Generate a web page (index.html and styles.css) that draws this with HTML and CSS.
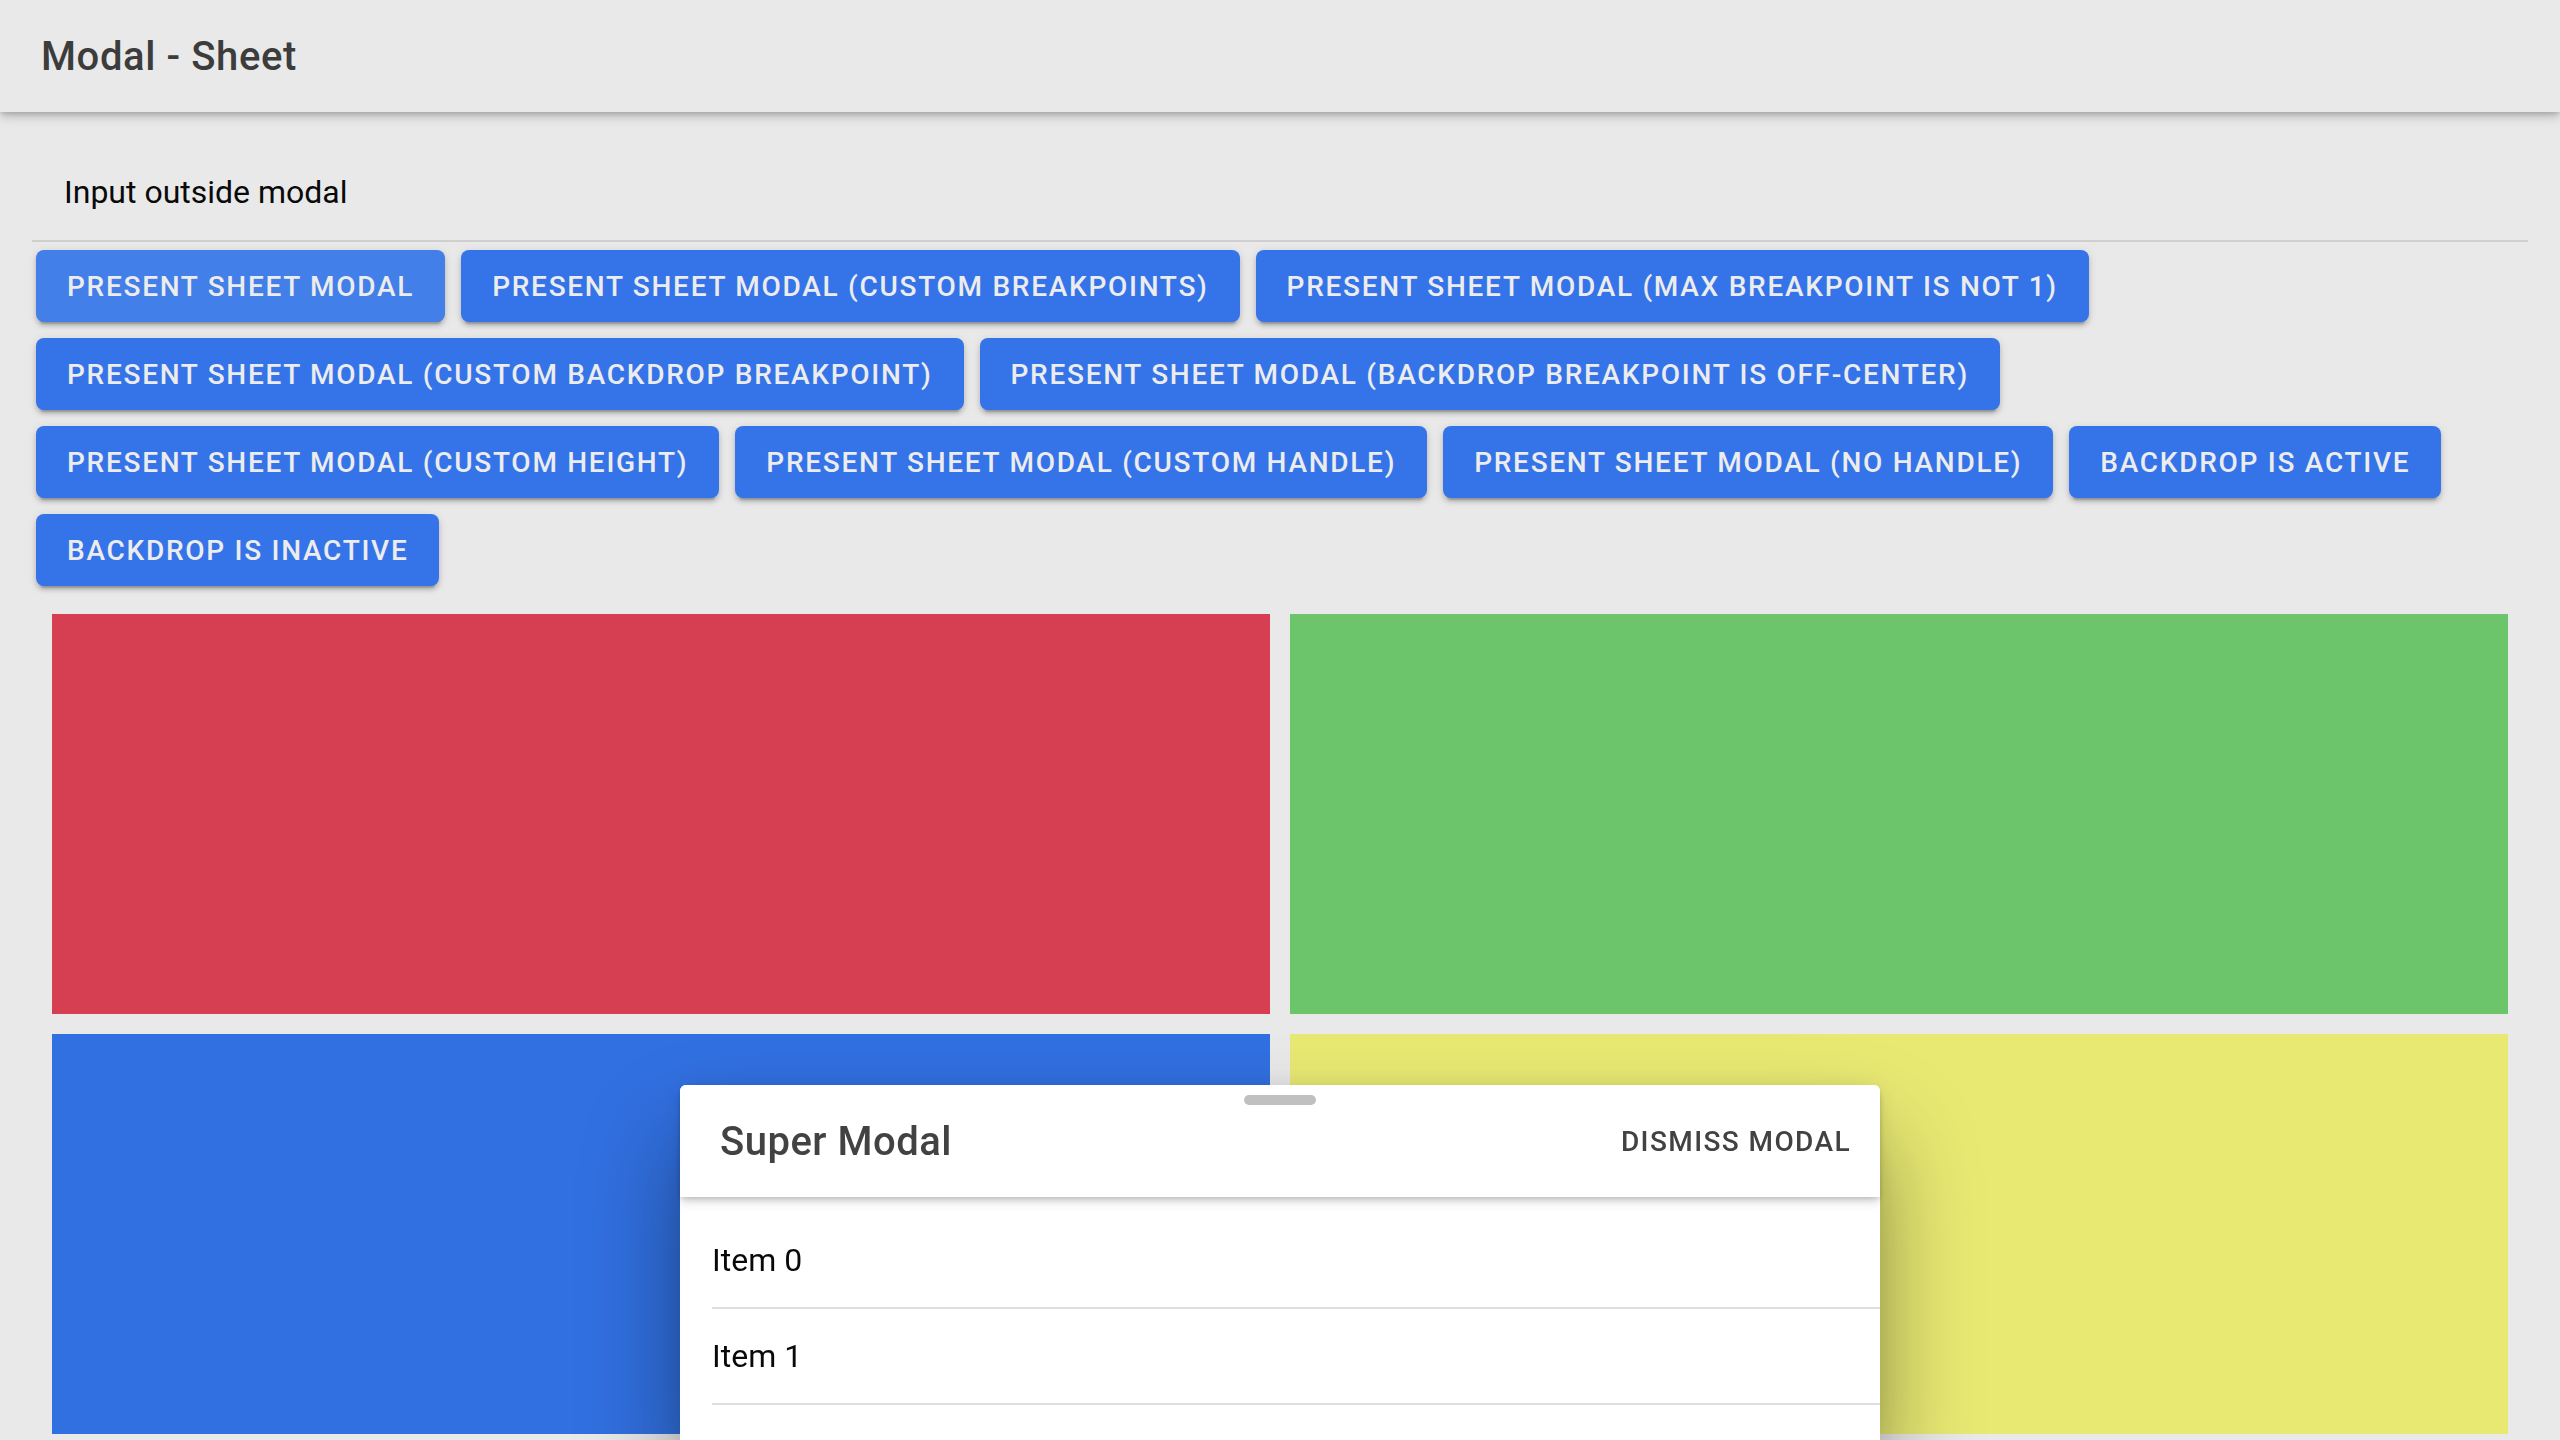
FILE: index.html
```html
<!DOCTYPE html>
<html lang="en">
<head>
<meta charset="utf-8">
<title>Modal - Sheet</title>
<link rel="stylesheet" href="styles.css">
</head>
<body>
<header class="toolbar">
  <div class="toolbar-title">Modal - Sheet</div>
</header>
<main class="content">
  <div class="item input-item">
    <div class="item-inner">Input outside modal</div>
  </div>
  <div class="buttons">
    <button class="btn btn-focused">Present Sheet Modal</button>
    <button class="btn">Present Sheet Modal (Custom Breakpoints)</button>
    <button class="btn">Present Sheet Modal (Max breakpoint is not 1)</button>
    <button class="btn">Present Sheet Modal (Custom Backdrop Breakpoint)</button>
    <button class="btn">Present Sheet Modal (Backdrop breakpoint is off-center)</button>
    <button class="btn">Present Sheet Modal (Custom Height)</button>
    <button class="btn">Present Sheet Modal (Custom Handle)</button>
    <button class="btn">Present Sheet Modal (No Handle)</button>
    <button class="btn">Backdrop is active</button>
    <button class="btn">Backdrop is inactive</button>
  </div>
  <div class="grid">
    <div class="cell red"></div>
    <div class="cell green"></div>
    <div class="cell blue"></div>
    <div class="cell yellow"></div>
  </div>
</main>
<div class="sheet">
  <div class="handle"></div>
  <div class="sheet-header">
    <div class="sheet-title">Super Modal</div>
    <button class="clear-btn">Dismiss Modal</button>
  </div>
  <div class="list">
    <div class="list-item"><div class="list-inner">Item 0</div></div>
    <div class="list-item"><div class="list-inner">Item 1</div></div>
  </div>
</div>
</body>
</html>
```
FILE: styles.css
```css
* { box-sizing: border-box; }
html, body {
  margin: 0;
  padding: 0;
  width: 2560px;
  height: 1440px;
  overflow: hidden;
}
body {
  background: #e9e9e9;
  font-family: Roboto, "Liberation Sans", sans-serif;
  color: #0a0a0a;
}
.toolbar {
  position: relative;
  z-index: 2;
  height: 112px;
  background: #e9e9e9;
  display: flex;
  align-items: center;
  padding-left: 41px;
  box-shadow: 0 4px 8px -2px rgba(0,0,0,0.18), 0 8px 10px 0 rgba(0,0,0,0.08), 0 2px 4px 0 rgba(0,0,0,0.1);
}
.toolbar-title {
  font-size: 40px;
  font-weight: 500;
  letter-spacing: 0.6px;
  color: #3c3c3c;
}
.content {
  padding: 32px 32px 0 32px;
}
.input-item {
  height: 98px;
  padding-left: 32px;
  border-bottom: 2px solid #cfcfcf;
  display: flex;
  align-items: center;
}
.item-inner {
  font-size: 32px;
  color: #0a0a0a;
}
.buttons {
  display: flex;
  flex-wrap: wrap;
  column-gap: 8px;
}
.btn {
  height: 72px;
  margin: 8px 4px;
  padding: 0 31px;
  border: none;
  border-radius: 8px;
  background: #3574e8;
  color: #ececec;
  font-family: Roboto, "Liberation Sans", sans-serif;
  font-size: 28px;
  font-weight: 500;
  letter-spacing: 1.72px;
  text-transform: uppercase;
  white-space: nowrap;
  box-shadow: 0 6px 2px -4px rgba(0,0,0,0.2), 0 4px 4px 0 rgba(0,0,0,0.14), 0 2px 10px 0 rgba(0,0,0,0.12);
}
.btn-focused {
  background: #427fe8;
}
.grid {
  display: grid;
  grid-template-columns: 1fr 1fr;
  grid-auto-rows: 400px;
  gap: 20px;
  padding: 20px;
}
.red { background: #d63f52; }
.green { background: #6cc56a; }
.blue { background: #3170e0; }
.yellow { background: #e8e973; }

.sheet {
  position: fixed;
  z-index: 10;
  left: calc(50% - 600px);
  width: 1200px;
  top: 1085px;
  bottom: 0;
  background: #ffffff;
  border-radius: 6px 6px 0 0;
  box-shadow: 0 56px 96px rgba(0,0,0,0.4), 0 0 24px rgba(0,0,0,0.08);
}
.handle {
  position: absolute;
  top: 10px;
  left: calc(50% - 36px);
  width: 72px;
  height: 10px;
  border-radius: 5px;
  background: #c0c0c0;
  z-index: 3;
}
.sheet-header {
  position: relative;
  z-index: 2;
  height: 112px;
  display: flex;
  align-items: center;
  justify-content: space-between;
  padding: 0 29px 0 40px;
  border-radius: 6px 6px 0 0;
  background: #ffffff;
  box-shadow: 0 4px 8px -2px rgba(0,0,0,0.18), 0 8px 10px 0 rgba(0,0,0,0.06), 0 2px 4px 0 rgba(0,0,0,0.08);
}
.sheet-title {
  font-size: 40px;
  font-weight: 500;
  letter-spacing: 0.5px;
  color: #424242;
}
.clear-btn {
  border: none;
  background: transparent;
  padding: 0;
  font-family: Roboto, "Liberation Sans", sans-serif;
  font-size: 28px;
  font-weight: 500;
  letter-spacing: 1.4px;
  text-transform: uppercase;
  color: #424242;
}
.list {
  padding-top: 16px;
}
.list-item {
  padding-left: 32px;
}
.list-inner {
  height: 96px;
  display: flex;
  align-items: center;
  border-bottom: 2px solid #dedede;
  font-size: 32px;
  color: #0a0a0a;
}
```
